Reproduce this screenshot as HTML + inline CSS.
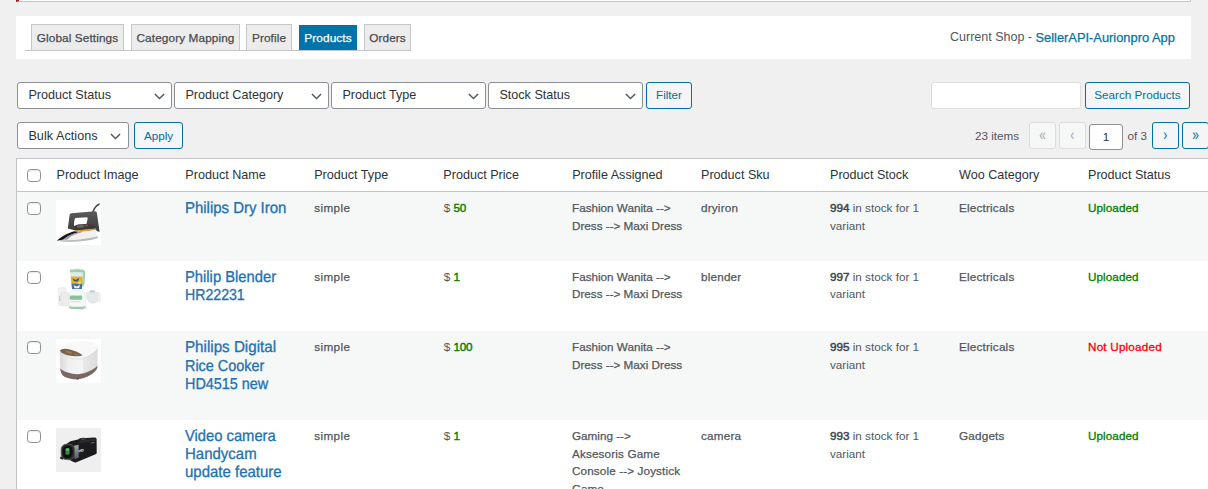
<!DOCTYPE html>
<html lang="en">
<head>
<meta charset="utf-8">
<title>Products</title>
<style>
*{box-sizing:border-box;margin:0;padding:0}
html,body{width:1208px;height:489px;overflow:hidden;background:#f0f0f1}
body{font-family:"Liberation Sans",sans-serif;font-size:11.7px;color:#3c434a;position:relative}
.abs{position:absolute}
.t{position:absolute;white-space:nowrap}
/* notice */
#notice{position:absolute;left:16px;top:-30px;width:1175px;height:32px;background:#fff;border:1px solid #c3c4c7;border-left:3.4px solid #9a1a1a}
/* tab panel */
#panel{position:absolute;left:16px;top:16px;width:1175px;height:43px;background:#fff}
#tabline{position:absolute;left:25px;top:50px;width:386px;height:1px;background:#c3c4c7}
.tab{position:absolute;top:24px;height:26px;border:1px solid #c8c8c9;border-bottom:none;background:#ececec;color:#464b50;font-size:11.8px;letter-spacing:.1px;line-height:25px;padding-top:1.3px;text-align:center;white-space:nowrap;-webkit-text-stroke:.25px}
.tab.on{background:#0073aa;border:none;color:#fff;height:25px;top:25px;line-height:25px}
#shop{position:absolute;top:28px;left:950px;font-size:12.5px;line-height:18px;color:#50575e;white-space:nowrap}
#shop a{position:relative;top:.6px;color:#0073aa;text-decoration:none;font-size:12.86px;-webkit-text-stroke:.25px}
/* selects */
.sel{position:absolute;height:27px;border:1px solid #8c8f94;border-radius:3px;background:#fff;color:#2c3338;font-size:12.6px;line-height:25px;padding-left:10.4px;white-space:nowrap}
.sel svg{position:absolute;right:5.5px;top:9.8px;width:11px;height:7px}
.btn{position:absolute;height:27px;border:1px solid #0071a1;border-radius:3px;background:#f3f5f6;color:#0071a1;font-size:11.7px;line-height:23px;text-align:center;white-space:nowrap}
.btn.dis{border-color:#dcdcde;color:#a7aaad;background:#f6f7f7}
.pg{display:inline-block;position:relative;top:1.3px;transform:scale(.92,1.28);transform-origin:50% 60%}
.inp{position:absolute;border:1px solid #8c8f94;border-radius:3px;background:#fff}
/* table */
#table{position:absolute;left:16px;top:158px;width:1200px;height:340px;border:1px solid #c3c4c7;background:#fff}
.row{position:absolute;left:17px;width:1191px}
.cb{position:absolute;left:26.7px;width:14.5px;height:13px;border:1px solid #8c8f94;border-radius:3.6px;background:#fff;box-shadow:inset 0 1px 2px rgba(0,0,0,.1)}
.th{position:absolute;top:166px;font-size:12.6px;line-height:18px;color:#2c3338;white-space:nowrap}
.td{position:absolute;font-size:11.7px;line-height:17.55px;color:#50575e;white-space:nowrap;-webkit-text-stroke:.25px}
.td i{font-style:normal;-webkit-text-stroke:0}
.ls{letter-spacing:.2px}
.up{position:relative;top:-1px}
.ttl{position:absolute;left:185px;font-size:15px;line-height:18px;color:#2271b1;white-space:nowrap;transform-origin:0 14.1px;-webkit-text-stroke:.3px #2271b1}
.g{color:#008000;font-weight:bold}
.r{color:#f00}
.td.g,.td.r{font-weight:normal;-webkit-text-stroke:.3px;letter-spacing:.08px}
.td.r{letter-spacing:.2px}
.td .g{font-weight:normal;-webkit-text-stroke:.4px;letter-spacing:-.25px}
b{font-weight:normal;color:#3c434a;-webkit-text-stroke:.45px}
.img{position:absolute;left:56px;width:45px;height:45px;background:#fff}
</style>
</head>
<body>
<div id="notice"></div>
<div id="panel"></div>
<div id="tabline"></div>
<div class="tab" style="left:31px;width:93px">Global Settings</div>
<div class="tab" style="left:131px;width:109px">Category Mapping</div>
<div class="tab" style="left:246px;width:46px">Profile</div>
<div class="tab on" style="left:299px;width:58px">Products</div>
<div class="tab" style="left:364px;width:47px">Orders</div>
<div id="shop">Current Shop - <a>SellerAPI-Aurionpro App</a></div>

<div class="sel" style="left:17px;top:82px;width:154.5px">Product Status<svg viewBox="0 0 11 7"><path d="M.9 1L5.5 5.6L10.1 1" fill="none" stroke="#50575e" stroke-width="1.4"/></svg></div>
<div class="sel" style="left:174px;top:82px;width:154.5px">Product Category<svg viewBox="0 0 11 7"><path d="M.9 1L5.5 5.6L10.1 1" fill="none" stroke="#50575e" stroke-width="1.4"/></svg></div>
<div class="sel" style="left:331px;top:82px;width:154.5px">Product Type<svg viewBox="0 0 11 7"><path d="M.9 1L5.5 5.6L10.1 1" fill="none" stroke="#50575e" stroke-width="1.4"/></svg></div>
<div class="sel" style="left:488px;top:82px;width:154.5px">Stock Status<svg viewBox="0 0 11 7"><path d="M.9 1L5.5 5.6L10.1 1" fill="none" stroke="#50575e" stroke-width="1.4"/></svg></div>
<div class="btn" style="left:646px;top:82px;width:46px">Filter</div>
<div class="inp" style="left:931px;top:82px;width:150px;height:27px;border-color:#ddd"></div>
<div class="btn" style="left:1085px;top:82px;width:105px">Search Products</div>

<div class="sel" style="left:17px;top:122px;width:112px;line-height:27.6px;letter-spacing:.05px">Bulk Actions<svg style="right:6.9px" viewBox="0 0 11 7"><path d="M.9 1L5.5 5.6L10.1 1" fill="none" stroke="#50575e" stroke-width="1.4"/></svg></div>
<div class="btn" style="left:134px;top:122px;width:49px;line-height:25.4px">Apply</div>

<div class="t" style="left:975px;top:127px;font-size:11.7px;line-height:18px;color:#50575e">23 items</div>
<div class="btn dis" style="left:1029px;top:122px;width:27px;font-size:13px;line-height:24px"><span class="pg">«</span></div>
<div class="btn dis" style="left:1059px;top:122px;width:27px;font-size:13px;line-height:24px"><span class="pg">‹</span></div>
<div class="inp" style="left:1089px;top:124px;width:34px;height:26px;text-align:center;font-size:11.7px;line-height:24px;color:#2c3338">1</div>
<div class="t" style="left:1127.5px;top:127px;font-size:11.7px;line-height:18px;color:#50575e">of 3</div>
<div class="btn" style="left:1152px;top:122px;width:27px;font-size:13px;line-height:24px"><span class="pg">›</span></div>
<div class="btn" style="left:1182px;top:122px;width:27px;font-size:13px;line-height:24px"><span class="pg">»</span></div>

<div id="table"></div>
<div class="abs" style="left:17px;top:191px;width:1191px;height:1px;background:#c3c4c7"></div>
<div class="row" style="top:192px;height:69px;background:#f6f7f7"></div>
<div class="row" style="top:331px;height:89px;background:#f6f7f7"></div>

<div class="cb" style="top:169px"></div>
<div class="th" style="left:56.5px">Product Image</div>
<div class="th" style="left:185.3px">Product Name</div>
<div class="th" style="left:314.2px">Product Type</div>
<div class="th" style="left:443.3px">Product Price</div>
<div class="th" style="left:572.2px">Profile Assigned</div>
<div class="th" style="left:701px">Product Sku</div>
<div class="th" style="left:830px">Product Stock</div>
<div class="th" style="left:959px">Woo Category</div>
<div class="th" style="left:1088px">Product Status</div>

<!-- row 1 -->
<div class="cb" style="top:202px"></div>
<svg class="img" style="top:200px" viewBox="0 0 45 45"><defs><linearGradient id="ig" x1="0" y1="0" x2="0" y2="1"><stop offset="0" stop-color="#5a5a5a"/><stop offset="1" stop-color="#3c3c3c"/></linearGradient></defs><rect width="45" height="45" fill="#fff"/>
<path d="M36.8 12.2C38 8.6 40 5.6 43 4.2" fill="none" stroke="#4c4c4c" stroke-width="1.6" stroke-linecap="round"/>
<path d="M13.6 15Q13.8 13.4 15.4 13.2L39 11.2Q40.6 11.2 40.9 12.8L43.6 32L39.6 30.4L39.7 28.6L19.5 30.4L11.8 28.6Z" fill="url(#ig)"/>
<path d="M19.4 18L30.6 17.2Q32 17.3 31.7 18.8L30.4 24L22 24.6L18 26Q18 19 19.4 18Z" fill="#fff"/>
<path d="M18.6 26.2L22.4 24.7L33 24L39.2 26.8L39.6 28.7L19.8 30.4Z" fill="#3a3a3a"/><path d="M20.6 25.8L27 24.6L28.6 27.2L21.4 28Z" fill="#666"/>
<ellipse cx="30.6" cy="25.4" rx="1.7" ry=".9" fill="#b03a22"/>
<path d="M19.3 30.4L39.7 28.6L40.4 30L25 32L19.4 31.6Z" fill="#e39a1e"/>
<path d="M1 40.6Q8 34 18 31.2L25 32L40.4 30L42 38Q30 42 12 41.8Q4 42 1 40.6Z" fill="#f1f1f1"/>
<path d="M1 40.6Q8 34 18 31.2L23.4 31.9Q12 34.6 7.4 39.6Q3.4 40.8 1 40.6Z" fill="#161616"/>
<path d="M7.4 39.6Q12 34.8 23.4 31.9L26 32.3Q15 35 11 39.8Z" fill="#9a9a9a"/>
<path d="M7 40.2Q22 40.8 41.8 36.6L42 38Q30 42 12 41.8Q5 41.9 1 40.6Z" fill="#b9b9b9"/>
</svg>
<div class="ttl" style="top:199px;transform:scale(0.997,1.06) rotate(.03deg)">Philips Dry Iron</div>
<div class="td ls" style="left:314.2px;top:199px;letter-spacing:.4px">simple</div>
<div class="td" style="left:443.8px;top:199px"><i>$</i> <span class="g">50</span></div>
<div class="td" style="left:572px;top:199px">Fashion Wanita --&gt;<br>Dress --&gt; Maxi Dress</div>
<div class="td ls" style="left:701px;top:199px">dryiron</div>
<div class="td" style="left:830px;top:199px"><b>994</b><i> in stock for 1<br>variant</i></div>
<div class="td ls" style="left:959px;top:199px">Electricals</div>
<div class="td g" style="left:1088px;top:199px">Uploaded</div>

<!-- row 2 -->
<div class="cb" style="top:271px"></div>
<svg class="img" style="top:268px" viewBox="0 0 45 45"><rect width="45" height="45" fill="#fff"/>
<rect x="2.4" y="19.8" width="7.8" height="17.4" rx="1" fill="#f1f2f2" stroke="#dfe2e2" stroke-width=".5"/>
<rect x="5.2" y="24.4" width="7.4" height="13.2" rx="1.2" fill="#eceeee" stroke="#d6d9d9" stroke-width=".5"/>
<rect x="3.2" y="27.6" width="1.1" height="5.4" fill="#c2c6c6"/>
<path d="M30.6 24.4L42.6 24.4L42.2 31Q41 35 37 35.2Q32.5 35 31 31Z" fill="#e6e9e9" stroke="#d3d6d6" stroke-width=".5"/>
<rect x="41.6" y="25.6" width="2.8" height="8.4" rx=".8" fill="#f0f1f1" stroke="#dcdfdf" stroke-width=".5"/>
<ellipse cx="36.4" cy="23.4" rx="3" ry="1.3" fill="#cdd1d1"/>
<path d="M13.8 2.8Q13.8 1.4 15.2 1.4L27 1.6Q29.2 2.4 29.3 4.6L28.4 16Q27.8 18.6 25.4 19.6L26.6 4.8L14 4.6Z" fill="#9fd0ae"/><rect x="18.4" y=".7" width="5.6" height="1" rx=".4" fill="#bfc4c2"/>
<path d="M14.2 4.4L27 4.6L25.8 21.6L16.2 21.6Z" fill="#dfe8ec"/>
<path d="M14.7 8.6L26.8 8.7L26.2 15.4L15.4 15.4Z" fill="#e3b224"/>
<path d="M15.4 15.4L26.2 15.4L25.9 21L16.1 21Z" fill="#456f9f"/>
<path d="M16.5 10.2L19.6 12L23.2 9.8L22 13.6L18 13.2Z" fill="#2f5687"/>
<path d="M21 14.4L24.6 12.6L25.6 15.6L23 16.6Z" fill="#f4d04a"/>
<path d="M17.5 17.2L20.5 18.4L24 17L23.2 20.2L18.6 20.2Z" fill="#eef3f8"/>
<path d="M16 22.2L26.8 22.2Q29 23.6 29.7 27L29.7 38.6Q29.5 40.8 27 40.8L15.4 40.8Q13 40.8 12.8 38.6L12.8 27Q13.4 23.6 16 22.2Z" fill="#e9ecec"/>
<path d="M16.4 23L26.4 23Q28.4 24.2 28.8 27L28.8 37.8L13.7 37.8L13.7 27Q14.2 24.2 16.4 23Z" fill="#f7f9f8"/>
<rect x="13.8" y="27.6" width="12.4" height="4.2" rx=".8" fill="#86c39b"/>
<path d="M12.8 38.2Q21 40 29.7 38.2L29.7 38.8Q29.4 40.9 27 40.9L15.4 40.9Q13 40.9 12.8 38.8Z" fill="#98cdaa"/>
<rect x="14.6" y="33.4" width="10" height=".8" fill="#cdd6d1"/>
<path d="M24 42L31.5 39.8" stroke="#dcdfdf" stroke-width="1.1" fill="none"/>
</svg>
<div class="ttl" style="top:268px;transform:scale(0.984,1.06) rotate(.03deg)">Philip Blender</div>
<div class="ttl" style="top:286px;transform:scale(0.942,1.06) rotate(.03deg)">HR22231</div>
<div class="td ls" style="left:314.2px;top:268px;letter-spacing:.4px">simple</div>
<div class="td" style="left:443.8px;top:268px"><i>$</i> <span class="g">1</span></div>
<div class="td" style="left:572px;top:268px">Fashion Wanita --&gt;<br><span class="up">Dress --&gt; Maxi Dress</span></div>
<div class="td ls" style="left:701px;top:268px">blender</div>
<div class="td" style="left:830px;top:268px"><b>997</b><i> in stock for 1<br><span class="up">variant</span></i></div>
<div class="td ls" style="left:959px;top:268px">Electricals</div>
<div class="td g" style="left:1088px;top:268px">Uploaded</div>

<!-- row 3 -->
<div class="cb" style="top:341px"></div>
<svg class="img" style="top:338.6px;height:44.4px" viewBox="0 0 45 45" preserveAspectRatio="none"><defs><linearGradient id="rg" x1="0" y1="0" x2="1" y2="0"><stop offset="0" stop-color="#dadada"/><stop offset=".25" stop-color="#f0f0f0"/><stop offset=".6" stop-color="#f5f5f5"/><stop offset=".62" stop-color="#e9e9e9"/><stop offset="1" stop-color="#dcdcdc"/></linearGradient></defs><rect width="45" height="45" fill="#fff"/>
<path d="M3.8 12C5 8.4 9 5.6 14 4.2C19 3 25 2.5 31 2.7C36 2.9 40.4 4.6 41.8 9L41.4 28C41.2 29.4 41 30 40.7 30.7C39 33.6 36 35.8 33 37.2C29.6 38.9 26 40.4 22 40.8C18 41 15 40.6 12 39.6C9.6 38.8 7.6 37.8 6.4 36.5C5.2 35 4.6 33.2 4.4 31Z" fill="url(#rg)"/>
<path d="M3.9 12.2C5 8.4 9 5.6 14 4.2C19 3 25 2.5 31 2.7C36 2.9 40.4 4.6 41.8 9.4C38 14 33 17 26.4 18.6C18 19 9 17 3.9 12.2Z" fill="#f8f8f8"/>
<path d="M4 14.4C10 19.6 18 21 26.4 20.2C33 18.6 38 15.6 41.8 11.6" fill="none" stroke="#dcdcdc" stroke-width=".8"/>
<path d="M4.3 29.6C5.6 31.4 8 32.8 11 33.8C15 35.2 18.6 35.8 21.9 35.7C26 35.4 30 34.2 33.6 32.4C37 30.8 39.8 29.2 41.3 27.2L41.4 28C41.2 29.4 41 30 40.7 30.7C39 33.6 36 35.8 33 37.2C29.6 38.9 26 40.4 22 40.8C18 41 15 40.6 12 39.6C9.6 38.8 7.6 37.8 6.4 36.5C5.2 35 4.6 33.2 4.4 31Z" fill="#7b6862"/>
<path d="M3.8 11.6Q6.5 9 13 10.4Q22 12.6 26.6 16.4Q24.6 18.2 16 17.2Q6 15.8 3.8 11.6Z" fill="#75624f"/>
<ellipse cx="13" cy="13.4" rx="3.6" ry="1.1" transform="rotate(14 13 13.4)" fill="#a87748"/>
<ellipse cx="20" cy="15.8" rx="2.6" ry="1" transform="rotate(14 20 15.8)" fill="#94704c"/>
<ellipse cx="21.6" cy="40.4" rx="1.5" ry=".7" fill="#54443f"/>
</svg>
<div class="ttl" style="top:338px;transform:scale(1.011,1.06) rotate(.03deg)">Philips Digital</div>
<div class="ttl" style="top:357px;transform:scale(0.960,1.06) rotate(.03deg)">Rice Cooker</div>
<div class="ttl" style="top:375px;transform:scale(0.959,1.06) rotate(.03deg)">HD4515 new</div>
<div class="td ls" style="left:314.2px;top:338px;letter-spacing:.4px">simple</div>
<div class="td" style="left:443.8px;top:338px"><i>$</i> <span class="g">100</span></div>
<div class="td" style="left:572px;top:338px">Fashion Wanita --&gt;<br>Dress --&gt; Maxi Dress</div>
<div class="td" style="left:830px;top:338px"><b>995</b><i> in stock for 1<br>variant</i></div>
<div class="td ls" style="left:959px;top:338px">Electricals</div>
<div class="td r" style="left:1088px;top:338px">Not Uploaded</div>

<!-- row 4 -->
<div class="cb" style="top:430px"></div>
<svg class="img" style="top:427.8px;height:44.4px" viewBox="0 0 45 45" preserveAspectRatio="none"><defs><linearGradient id="cg" x1="0" y1="0" x2="0" y2="1"><stop offset="0" stop-color="#a6a6aa"/><stop offset="1" stop-color="#5e5e62"/></linearGradient></defs><rect width="45" height="45" fill="#efefef"/>
<path d="M8.6 17.4L14.4 13.5L22 11.7L24 10.5Q27 9.3 30 10.2L39 9.7Q40.5 9.9 40.6 11.5L40.7 25Q40.7 26.1 39.6 26.7L20.4 34.8Q18.8 35.3 17.6 34.5L8.6 30Z" fill="#1c1c1e"/>
<path d="M23 12.6L39.4 10.6L39.6 13L23.2 15.4Z" fill="#2b2b2e"/>
<path d="M25 10.8Q27.4 10 29.6 10.6L29.6 11.6L25 12.2Z" fill="#4a4a4e"/>
<path d="M18 18L22.6 17L22.6 29.8L18.6 31.6Z" fill="url(#cg)"/>
<rect x="5.2" y="16.5" width="13.2" height="15.5" rx="5" fill="#2c2c2e" stroke="#5c5c60" stroke-width=".8"/>
<ellipse cx="11.6" cy="24.2" rx="5.2" ry="6.5" fill="#0f0f11"/>
<rect x="9.5" y="20.3" width="4" height="6.8" rx="1.2" fill="#3a8544"/>
<rect x="9.9" y="20.8" width="3.2" height="2.4" rx=".8" fill="#62b46e"/>
<path d="M4.4 29L7.4 30.6L6.8 32.2L4 30.8Z" fill="#1f1f21"/>
<text x="23" y="24.9" font-family="Liberation Sans, sans-serif" font-size="3.7" font-weight="bold" fill="#f2f2f2" transform="rotate(-16 23 24.9)">HD</text>
<rect x="34.6" y="14.9" width="3.8" height=".8" fill="#77777b" transform="rotate(-9 34.6 14.9)"/>
</svg>
<div class="ttl" style="top:427px;transform:scale(0.983,1.06) rotate(.03deg)">Video camera</div>
<div class="ttl" style="top:445px;transform:scale(0.999,1.06) rotate(.03deg)">Handycam</div>
<div class="ttl" style="top:463px;transform:scale(0.999,1.06) rotate(.03deg)">update feature</div>
<div class="td ls" style="left:314.2px;top:427px;letter-spacing:.4px">simple</div>
<div class="td" style="left:443.8px;top:427px"><i>$</i> <span class="g">1</span></div>
<div class="td" style="left:572px;top:427px">Gaming --&gt;<br><span style="letter-spacing:.15px">Aksesoris Game</span><br><span style="letter-spacing:.13px">Console --&gt; Joystick</span><br>Game</div>
<div class="td ls" style="left:701px;top:427px">camera</div>
<div class="td" style="left:830px;top:427px"><b>993</b><i> in stock for 1<br>variant</i></div>
<div class="td ls" style="left:959px;top:427px">Gadgets</div>
<div class="td g" style="left:1088px;top:427px">Uploaded</div>
</body>
</html>
